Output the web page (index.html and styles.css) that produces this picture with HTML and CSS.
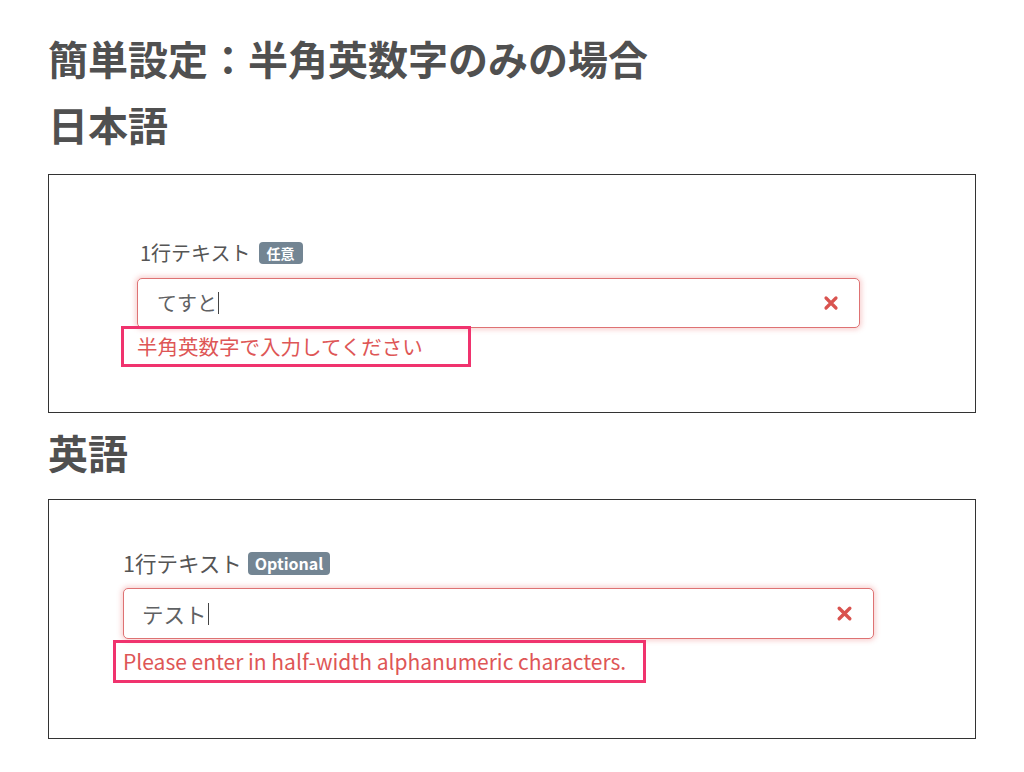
FILE: index.html
```html
<!DOCTYPE html>
<html lang="ja">
<head>
<meta charset="utf-8">
<title>簡単設定：半角英数字のみの場合</title>
<link rel="stylesheet" href="styles.css">
</head>
<body>
<main class="page">
  <h1 class="title">簡単設定：半角英数字のみの場合</h1>
  <h2 class="section-title section-title--first">日本語</h2>
  <section class="demo demo--ja">
    <div class="field">
      <div class="label-row">
        <span class="label">1行テキスト</span>
        <span class="badge">任意</span>
      </div>
      <div class="input">
        <span class="input-value">てすと</span><span class="caret"></span>
        <svg class="clear-icon" viewBox="0 0 16 16" aria-hidden="true"><path d="M3 3 L13 13 M13 3 L3 13"/></svg>
      </div>
      <div class="error error--ja">半角英数字で入力してください</div>
    </div>
  </section>
  <h2 class="section-title section-title--second">英語</h2>
  <section class="demo demo--en">
    <div class="field">
      <div class="label-row">
        <span class="label">1行テキスト</span>
        <span class="badge badge--en">Optional</span>
      </div>
      <div class="input">
        <span class="input-value">テスト</span><span class="caret"></span>
        <svg class="clear-icon" viewBox="0 0 16 16" aria-hidden="true"><path d="M3 3 L13 13 M13 3 L3 13"/></svg>
      </div>
      <div class="error error--en">Please enter in half-width alphanumeric characters.</div>
    </div>
  </section>
</main>
</body>
</html>
```

FILE: styles.css
```css
* { box-sizing: border-box; }

body {
  margin: 0;
  background: #ffffff;
  font-family: "Noto Sans CJK JP", "Noto Sans", sans-serif;
  color: #555555;
}

.page {
  padding: 33px 48px 0;
}

.title {
  margin: 0;
  font-size: 40px;
  line-height: 50px;
  font-weight: 700;
  color: #505050;
}

.section-title {
  margin: 0;
  font-size: 40px;
  line-height: 48px;
  font-weight: 700;
  color: #505050;
}

.section-title--first { margin-top: 17px; }
.section-title--second { margin-top: 15px; }

.demo {
  border: 1px solid #333333;
  margin-top: 26px;
}

.demo--ja {
  padding: 66px 115px 45px 88px;
}

.demo--en {
  margin-top: 23px;
  padding: 51px 101px 55px 74px;
}

.field {
  display: flex;
  flex-direction: column;
  align-items: flex-start;
}

.label-row {
  display: flex;
  align-items: center;
  gap: 8px;
  height: 24px;
}

.label {
  font-size: 20px;
  line-height: 24px;
  color: #555555;
}

.demo--ja .label { padding-left: 3px; }

.demo--en .label { font-size: 21.5px; }

.badge {
  display: inline-flex;
  align-items: center;
  height: 22px;
  padding: 0 8px;
  border-radius: 4px;
  background: #738593;
  color: #ffffff;
  font-size: 14px;
  font-weight: 700;
  line-height: 1;
}

.badge--en {
  height: 23px;
  padding: 0 7px;
  font-size: 16px;
}

.demo--en .label-row { gap: 6px; }

.input {
  align-self: stretch;
  display: flex;
  align-items: center;
  height: 50px;
  margin-top: 13px;
  padding: 0 20px 0 19px;
  background: #ffffff;
  border: 1px solid #de7273;
  border-radius: 5px;
  box-shadow: 0 0 5px 2px rgba(232, 100, 100, 0.28);
}

.demo--en .input {
  height: 51px;
  padding-left: 18px;
}

.input-value {
  font-size: 20px;
  line-height: 24px;
  color: #5f6163;
}

.demo--en .input-value { font-size: 21.5px; }

.caret {
  width: 1px;
  height: 22px;
  background: #444444;
  margin-left: 1px;
}

.clear-icon {
  width: 16px;
  height: 16px;
  margin-left: auto;
  fill: none;
  stroke: #d9534f;
  stroke-width: 3.2;
  stroke-linecap: round;
}

.demo--en .clear-icon {
  width: 17px;
  height: 17px;
}

.error {
  border: 3px solid #f0336e;
  color: #de5656;
  font-size: 20.5px;
  line-height: 35px;
  white-space: nowrap;
}

.error--ja {
  margin-top: -2px;
  margin-left: -16px;
  padding: 0 45px 0 13px;
}

.error--en {
  margin-top: 1px;
  margin-left: -10px;
  padding: 0 17px 0 7px;
  line-height: 37px;
  font-size: 21px;
}
```
